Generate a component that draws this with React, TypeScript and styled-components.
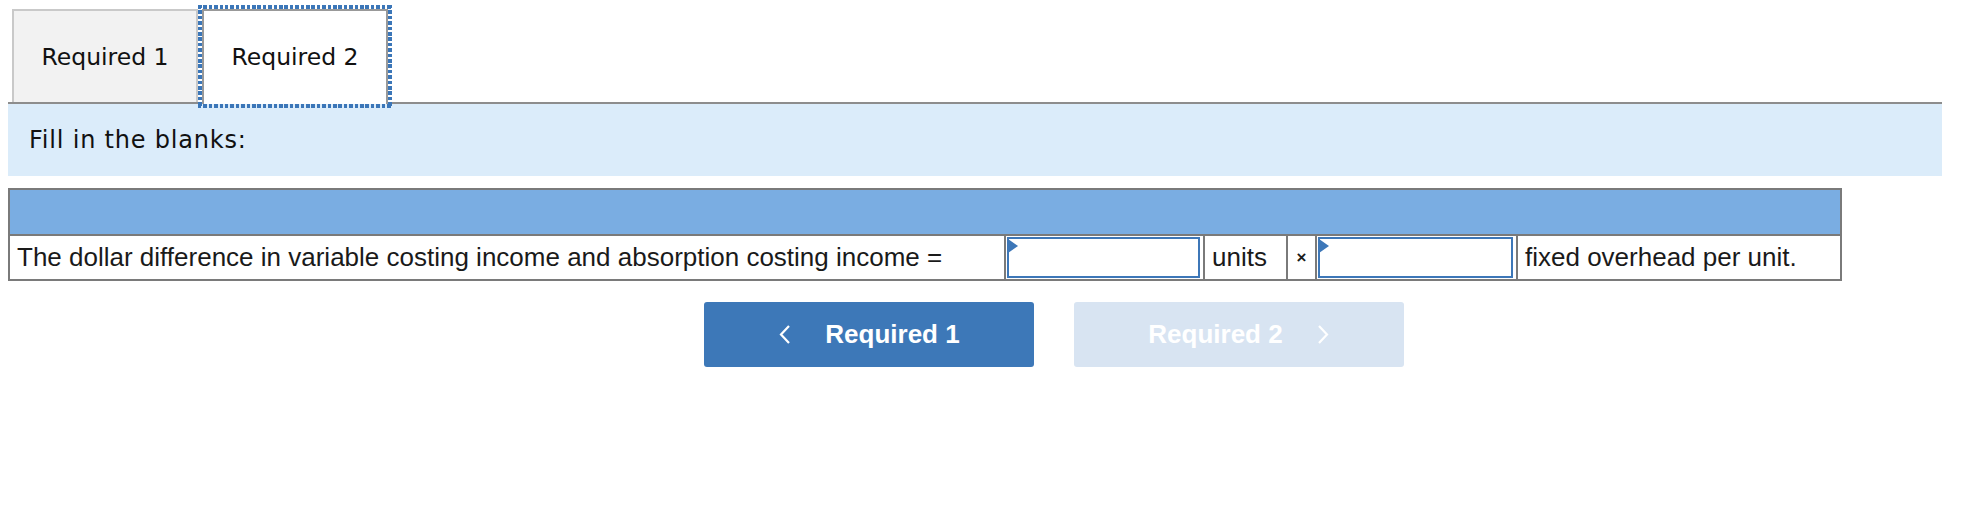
import React from 'react'
import styled, { createGlobalStyle } from 'styled-components'

const GlobalStyle = createGlobalStyle`
  html, body {
    margin: 0;
    padding: 0;
    background: #ffffff;
  }
  * {
    box-sizing: border-box;
  }
`

const Page = styled.div`
  padding: 9px 40px 0 8px;
`

const TabBar = styled.div`
  display: flex;
  align-items: flex-end;
  border-bottom: 2px solid #8d8d8d;
  padding-left: 4px;
  height: 95px;
`

const Tab = styled.div<{ $active?: boolean }>`
  position: relative;
  width: 186px;
  margin-left: ${({ $active }) => ($active ? '4px' : '0')};
  margin-bottom: ${({ $active }) => ($active ? '-2px' : '0')};
  height: ${({ $active }) => ($active ? '95px' : '93px')};
  display: flex;
  align-items: center;
  justify-content: center;
  padding-bottom: ${({ $active }) => ($active ? '2px' : '0')};
  background: ${({ $active }) => ($active ? '#ffffff' : '#f2f2f2')};
  border: 2px solid ${({ $active }) => ($active ? '#999999' : '#c9c9c9')};
  border-bottom: none;
  font-family: 'DejaVu Sans', Verdana, sans-serif;
  font-size: 23.5px;
  color: #111111;
`

const FocusRing = styled.span`
  position: absolute;
  left: -6px;
  right: -6px;
  top: -6px;
  bottom: -4px;
  pointer-events: none;
  background:
    repeating-linear-gradient(90deg, #3b76b8 0 3.5px, transparent 3.5px 5.4px) top left / 100% 4px no-repeat,
    repeating-linear-gradient(90deg, #3b76b8 0 3.5px, transparent 3.5px 5.4px) bottom left / 100% 4px no-repeat,
    repeating-linear-gradient(180deg, #3b76b8 0 3.5px, transparent 3.5px 5.4px) top left / 4px 100% no-repeat,
    repeating-linear-gradient(180deg, #3b76b8 0 3.5px, transparent 3.5px 5.4px) top right / 4px 100% no-repeat;
`

const Prompt = styled.div`
  height: 72px;
  display: flex;
  align-items: center;
  padding-left: 21px;
  background: #dbecfa;
  font-family: 'DejaVu Sans', Verdana, sans-serif;
  font-size: 24px;
  letter-spacing: 0.8px;
  color: #111111;
`

const Grid = styled.div`
  width: 1834px;
  margin-top: 12px;
  border: 2px solid #7a7a7a;
  font-family: 'Liberation Sans', Arial, sans-serif;
  color: #1a1a1a;
`

const HeaderBand = styled.div`
  height: 46px;
  background: #7aade2;
  border-bottom: 2px solid #7a7a7a;
`

const Row = styled.div`
  display: flex;
  height: 43px;
`

const Cell = styled.div<{ $width?: number; $center?: boolean }>`
  flex: ${({ $width }) => ($width ? `0 0 ${$width}px` : '1 1 auto')};
  display: flex;
  align-items: center;
  justify-content: ${({ $center }) => ($center ? 'center' : 'flex-start')};
  padding: 0 7px;
  border-right: 2px solid #7a7a7a;
  font-size: 26px;
  white-space: nowrap;
  &:last-child {
    border-right: none;
  }
`

const InputCell = styled.div<{ $width: number }>`
  flex: 0 0 ${({ $width }) => $width}px;
  padding: 1px 3px 1px 1px;
  border-right: 2px solid #7a7a7a;
  display: flex;
`

const Blank = styled.div`
  position: relative;
  flex: 1;
  border: 2px solid #3d77b8;
  background: #ffffff;
  &::before {
    content: '';
    position: absolute;
    left: -1px;
    top: 0;
    border-top: 7px solid transparent;
    border-bottom: 7px solid transparent;
    border-left: 10px solid #3d77b8;
  }
`

const Times = styled.span`
  font-size: 17px;
  font-weight: bold;
`

const ButtonRow = styled.div`
  display: flex;
  gap: 40px;
  margin-top: 21px;
  padding-left: 696px;
`

const NavButton = styled.button<{ $disabled?: boolean }>`
  width: 330px;
  height: 65px;
  border: none;
  border-radius: 3px;
  display: flex;
  align-items: center;
  justify-content: center;
  gap: 34px;
  background: ${({ $disabled }) => ($disabled ? '#d8e4f2' : '#3d78b8')};
  color: #ffffff;
  font-family: 'Liberation Sans', Arial, sans-serif;
  font-weight: bold;
  font-size: 26px;
  cursor: ${({ $disabled }) => ($disabled ? 'default' : 'pointer')};
`

const Chevron = ({ dir }: { dir: 'left' | 'right' }) => (
  <svg width="13" height="19" viewBox="0 0 13 19">
    <polyline
      points={dir === 'left' ? '11,1 3,9.5 11,18' : '2,1 10,9.5 2,18'}
      fill="none"
      stroke="#ffffff"
      strokeWidth="2.2"
    />
  </svg>
)

const App: React.FC = () => {
  return (
    <Page>
      <GlobalStyle />
      <TabBar>
        <Tab>Required 1</Tab>
        <Tab $active>
          Required 2
          <FocusRing />
        </Tab>
      </TabBar>
      <Prompt>Fill in the blanks:</Prompt>
      <Grid>
        <HeaderBand />
        <Row>
          <Cell $width={996}>
            The dollar difference in variable costing income and absorption costing income =
          </Cell>
          <InputCell $width={199}>
            <Blank />
          </InputCell>
          <Cell $width={83}>units</Cell>
          <Cell $width={29} $center>
            <Times>×</Times>
          </Cell>
          <InputCell $width={201}>
            <Blank />
          </InputCell>
          <Cell>fixed overhead per unit.</Cell>
        </Row>
      </Grid>
      <ButtonRow>
        <NavButton>
          <Chevron dir="left" />
          Required 1
        </NavButton>
        <NavButton $disabled>
          Required 2
          <Chevron dir="right" />
        </NavButton>
      </ButtonRow>
    </Page>
  )
}

export default App
